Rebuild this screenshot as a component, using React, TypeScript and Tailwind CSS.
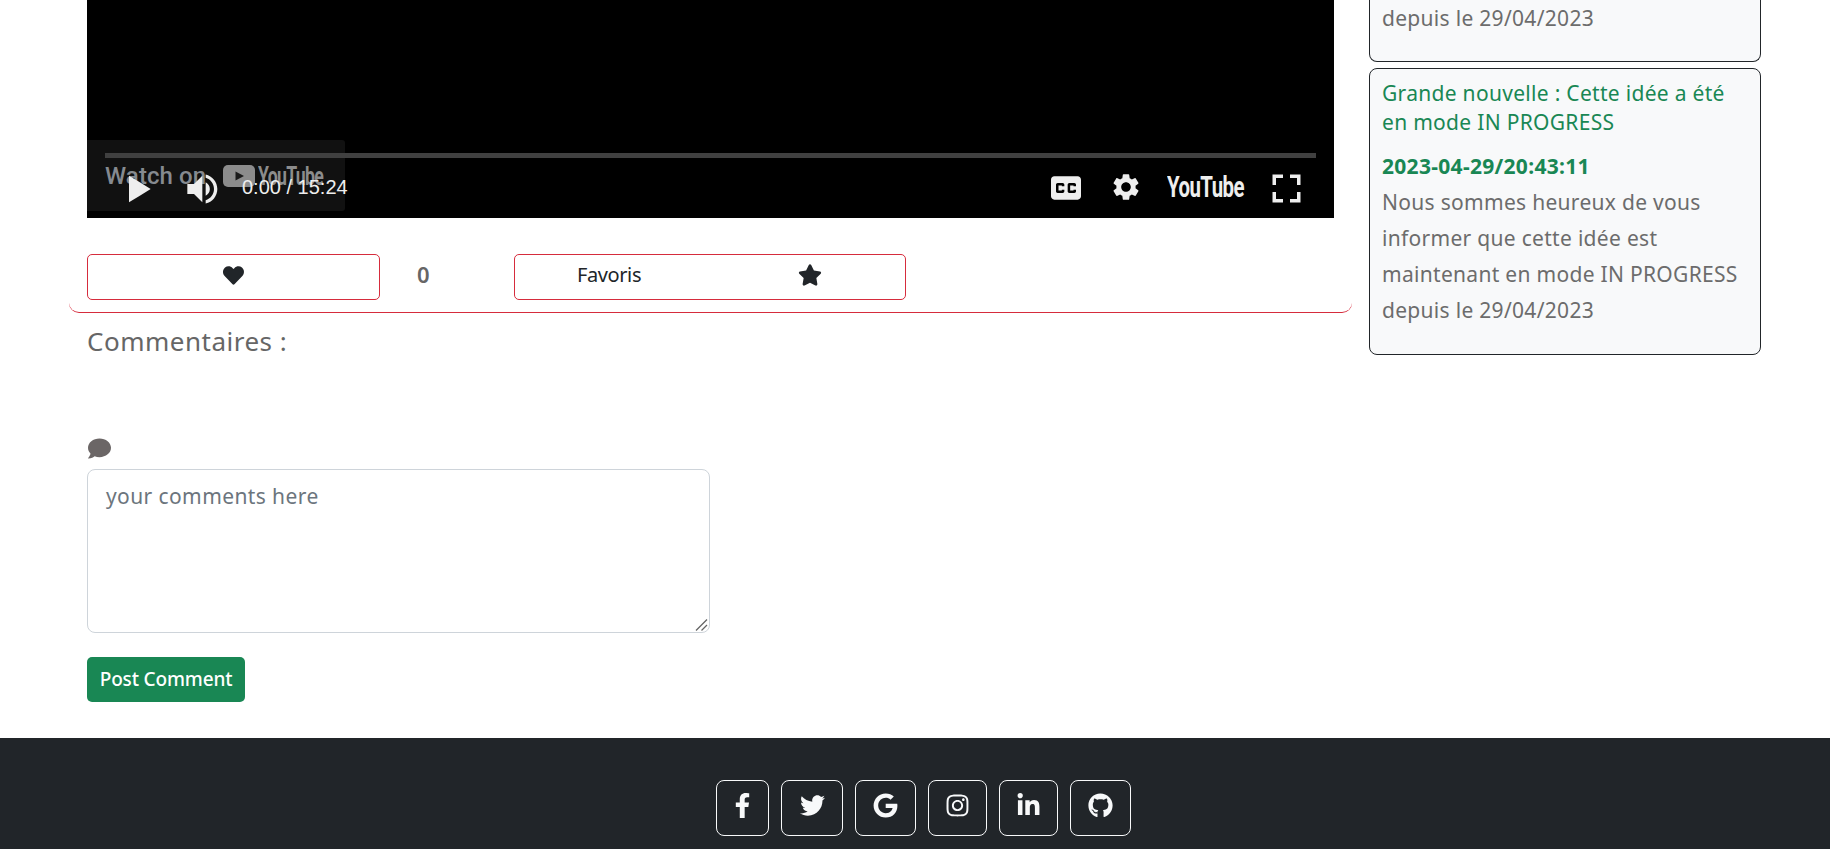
import { FaHeart, FaStar, FaComment, FaFacebookF, FaTwitter, FaGoogle, FaInstagram, FaLinkedinIn, FaGithub } from "react-icons/fa";
import { MdSettings } from "react-icons/md";

const socials = [
  { icon: <FaFacebookF />, w: "w-[53px]" },
  { icon: <FaTwitter />, w: "w-[62px]" },
  { icon: <FaGoogle />, w: "w-[61px]" },
  { icon: <FaInstagram />, w: "w-[59px]" },
  { icon: <FaLinkedinIn />, w: "w-[59px]" },
  { icon: <FaGithub />, w: "w-[61px]" },
];

function Video() {
  return (
    <div className="relative h-[218px] w-[1247px] bg-black overflow-hidden font-['Roboto',sans-serif]">
      <div className="absolute left-0 top-[140px] h-[71px] w-[258px] rounded-r-[3px] bg-[#111111]" />
      <div className="absolute left-[18px] top-[160px] flex h-[30px] items-center text-[#858a90]">
        <span className="mt-[2px] w-[100px] whitespace-nowrap text-[24px] font-medium leading-[30px] tracking-[0.1px]">Watch on</span>
        <svg viewBox="0 0 32 22" className="ml-[18px] mt-[1px] h-[22px] w-[32px] shrink-0">
          <rect width="32" height="22" rx="5" fill="#8c8c8c" />
          <path d="M12.5 6.5 21 11l-8.5 4.5z" fill="#1a1a1a" />
        </svg>
        <span className="ml-[3px] mt-[2px] w-[65px] origin-left scale-x-[0.68] whitespace-nowrap text-[26px] font-bold leading-[30px] tracking-[-1px] text-[#8c8c8c]">YouTube</span>
      </div>
      <div className="absolute left-[18px] top-[153px] h-[5px] w-[1211px] bg-[#404040]" />
      <div className="absolute bottom-[13px] left-[18px] right-[18px] flex h-[36px] items-center text-[#eeeeee]">
        <svg viewBox="0 0 36 36" className="ml-[4px] mt-[4px] h-[60px] w-[60px] shrink-0" fill="#eeeeee">
          <path d="M12,26 18.5,22 18.5,14 12,10 z M18.5,22 25,18 25,18 18.5,14 z" />
        </svg>
        <svg viewBox="0 0 36 36" className="ml-[5px] mt-[4px] h-[60px] w-[60px] shrink-0" fill="#eeeeee">
          <path d="M8,21 L12,21 L17,26 L17,10 L12,15 L8,15 L8,21 Z M19,14 L19,22 C20.48,21.32 21.5,19.77 21.5,18 C21.5,16.26 20.48,14.74 19,14 ZM19,11.29 C21.89,12.15 24,14.83 24,18 C24,21.17 21.89,23.85 19,24.71 L19,26.77 C23.01,25.86 26,22.28 26,18 C26,13.72 23.01,10.14 19,9.23 L19,11.29 Z" />
        </svg>
        <span className="ml-[8px] whitespace-nowrap font-['Liberation_Sans',sans-serif] text-[20px] leading-[36px]">0:00 / 15:24</span>
        <div className="flex-1" />
        <svg viewBox="0 0 36 36" className="mt-[1px] h-[60px] w-[60px] shrink-0" fill="#eeeeee">
          <path fillRule="evenodd" d="M11,11 C9.89,11 9,11.9 9,13 L9,23 C9,24.1 9.89,25 11,25 L25,25 C26.1,25 27,24.1 27,23 L27,13 C27,11.9 26.1,11 25,11 L11,11 Z M17,17 L15.5,17 L15.5,16.5 L13.5,16.5 L13.5,19.5 L15.5,19.5 L15.5,19 L17,19 L17,20 C17,20.55 16.55,21 16,21 L13,21 C12.45,21 12,20.55 12,20 L12,16 C12,15.45 12.45,15 13,15 L16,15 C16.55,15 17,15.45 17,16 L17,17 Z M24,17 L22.5,17 L22.5,16.5 L20.5,16.5 L20.5,19.5 L22.5,19.5 L22.5,19 L24,19 L24,20 C24,20.55 23.55,21 23,21 L20,21 C19.45,21 19,20.55 19,20 L19,16 C19,15.45 19.45,15 20,15 L23,15 C23.55,15 24,15.45 24,16 L24,17 Z" />
        </svg>
        <MdSettings className="ml-[14px] h-[32px] w-[32px] shrink-0" />
        <span className="ml-[25px] w-[78px] shrink-0 whitespace-nowrap">
          <span className="inline-block origin-left scale-x-[0.68] text-[30px] font-bold leading-[36px] tracking-[-0.8px] text-[#eeeeee]">YouTube</span>
        </span>
        <svg viewBox="0 0 36 36" className="ml-[10px] mr-[-2px] mt-[2px] h-[63px] w-[63px] shrink-0" fill="#eeeeee">
          <path d="m10,16 2,0 0,-4 4,0 0,-2 L10,10 l0,6 0,0 z" />
          <path d="m20,10 0,2 4,0 0,4 2,0 L26,10 l-6,0 0,0 z" />
          <path d="m24,24 -4,0 0,2 L26,26 l0,-6 -2,0 0,4 0,0 z" />
          <path d="M12,20 10,20 10,26 l6,0 0,-2 -4,0 0,-4 0,0 z" />
        </svg>
      </div>
    </div>
  );
}

export default function App() {
  return (
    <div className="flex h-[849px] flex-col overflow-hidden bg-white font-['Noto_Sans',sans-serif] text-[#6c6c6c]">
      <div className="flex h-[738px] shrink-0 items-start pl-[69px]">
        <div className="w-[1283px] shrink-0">
          <div className="rounded-b-[10px] border-b border-[#d62c3d] px-[18px] pb-[12px]">
            <Video />
            <div className="mt-[36px] flex items-center">
              <button className="flex h-[46px] w-[293px] items-center justify-center rounded-[5px] border border-[#d62c3d] pb-[4px] text-[#212529]">
                <FaHeart className="h-[21px] w-[23px]" />
              </button>
              <span className="ml-[36px] mt-[-5px] w-[23px] pl-[1px] text-[22px] font-semibold text-[#666666]">0</span>
              <button className="ml-[75px] flex h-[46px] w-[392px] items-center rounded-[5px] border border-[#d62c3d] pb-[5px] pl-[62px] text-[#212529]">
                <span className="w-[64px] whitespace-nowrap text-[20px] tracking-[-0.4px]">Favoris</span>
                <FaStar className="ml-[157px] h-[24px] w-[24px]" />
              </button>
            </div>
          </div>
          <div className="px-[18px]">
            <h2 className="mt-[11px] h-[34px] text-[26px] leading-[34px] tracking-[0.5px] text-[#666666]">Commentaires :</h2>
            <FaComment className="mt-[79px] h-[23px] w-[25px] text-[#6b6666]" />
            <div className="relative mt-[9px] h-[164px] w-[623px]">
              <textarea
                placeholder="your comments here"
                className="block h-full w-full resize-none rounded-[8px] border border-[#ced4da] bg-white px-[18px] py-[11px] text-[21px] leading-[30px] tracking-[0.4px] placeholder:text-[#6c757d]"
              />
              <svg viewBox="0 0 14 14" className="absolute bottom-[1px] right-[1px] h-[14px] w-[14px]" stroke="#666666" strokeWidth="1.3">
                <path d="M1 12.5 12 1.5M6.5 12.5 12 7" />
              </svg>
            </div>
            <button className="mt-[24px] flex h-[45px] w-[158px] items-center justify-center rounded-[5px] bg-[#198754] text-[19px] font-medium tracking-[-0.15px] text-white">Post Comment</button>
          </div>
        </div>
        <div className="ml-[17px] flex w-[392px] shrink-0 flex-col gap-[6px]">
          <div className="h-[62px] rounded-b-[8px] border border-t-0 border-[#212529] bg-[#f8f9fa] px-[12px]">
            <p className="text-[21px] leading-[36px] tracking-[0.3px]">depuis le 29/04/2023</p>
          </div>
          <div className="h-[287px] rounded-[8px] border border-[#212529] bg-[#f8f9fa] px-[12px] pt-[10px]">
            <p className="text-[21px] leading-[29px] tracking-[0.3px] text-[#198754]">Grande nouvelle : Cette idée a été en mode IN PROGRESS</p>
            <p className="mt-[15px] text-[21px] font-bold leading-[29px] tracking-[0.3px] text-[#198754]">2023-04-29/20:43:11</p>
            <p className="mt-[3px] text-[21px] leading-[36px] tracking-[0.3px]">Nous sommes heureux de vous informer que cette idée est maintenant en mode IN PROGRESS depuis le 29/04/2023</p>
          </div>
        </div>
      </div>
      <footer className="flex flex-1 items-start justify-center gap-[12px] bg-[#212529] pl-[17px] pt-[42px]">
        {socials.map((s, i) => (
          <a key={i} className={`flex h-[56px] ${s.w} items-center justify-center rounded-[8px] border border-[#f8f9fa] pb-[5px] text-[25px] text-[#f8f9fa]`}>
            {s.icon}
          </a>
        ))}
      </footer>
    </div>
  );
}
